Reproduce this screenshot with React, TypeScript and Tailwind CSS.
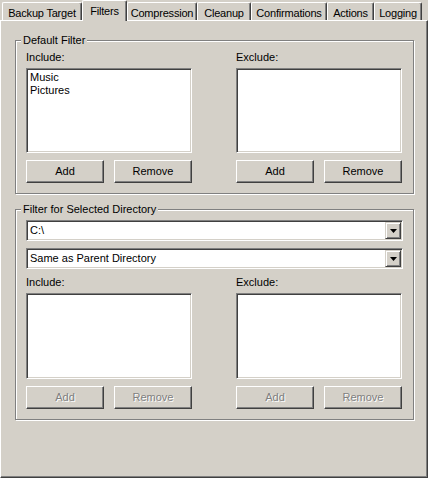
import React from "react";

const font = { fontFamily: '"Liberation Sans", Arial, sans-serif' };

function Tab({ label, w, active }: { label: string; w: string; active?: boolean }) {
  return active ? (
    <div
      className={`${w} relative z-10 -mb-px flex h-[21px] items-start justify-center whitespace-nowrap rounded-t-[2px] border-l border-t border-r border-l-white border-t-white border-r-[#404040] bg-[#d4d0c8] pt-[2px] tracking-[-0.2px] shadow-[inset_-1px_0_0_#808080]`}
    >
      {label}
    </div>
  ) : (
    <div
      className={`${w} flex h-[18px] items-start justify-center whitespace-nowrap rounded-t-[2px] border-l border-t border-r border-l-white border-t-white border-r-[#404040] bg-[#d4d0c8] pt-[2px] tracking-[-0.2px] shadow-[inset_-1px_0_0_#808080]`}
    >
      {label}
    </div>
  );
}

function Button({ label, disabled }: { label: string; disabled?: boolean }) {
  return (
    <div className="flex h-[23px] items-center justify-center border border-l-white border-t-white border-r-[#404040] border-b-[#404040] bg-[#d4d0c8] shadow-[inset_-1px_-1px_0_#808080]">
      <span className={disabled ? "text-[#808080] [text-shadow:1px_1px_0_#fff]" : "text-black"}>{label}</span>
    </div>
  );
}

function ListBox({ items, h }: { items: string[]; h: string }) {
  return (
    <div
      className={`${h} border border-l-[#808080] border-t-[#808080] border-r-white border-b-white bg-white px-[3px] py-[2px] shadow-[inset_1px_1px_0_#404040,inset_-1px_-1px_0_#d4d0c8]`}
    >
      {items.map((i) => (
        <div key={i} className="h-[13px] leading-[13px]">
          {i}
        </div>
      ))}
    </div>
  );
}

function Combo({ value }: { value: string }) {
  return (
    <div className="flex h-[21px] items-center border border-l-[#808080] border-t-[#808080] border-r-white border-b-white bg-white p-px shadow-[inset_1px_1px_0_#404040,inset_-1px_-1px_0_#d4d0c8]">
      <div className="flex-1 pl-[2px] leading-[13px]">{value}</div>
      <div className="flex h-[17px] w-[16px] items-center justify-center border border-l-[#d4d0c8] border-t-[#d4d0c8] border-r-[#404040] border-b-[#404040] bg-[#d4d0c8] shadow-[inset_1px_1px_0_#fff,inset_-1px_-1px_0_#808080]">
        <svg width="7" height="4" viewBox="0 0 7 4">
          <path d="M0 0h7L3.5 4z" fill="#000" />
        </svg>
      </div>
    </div>
  );
}

function Group({ title, children, cls }: { title: string; children: React.ReactNode; cls: string }) {
  return (
    <div className={`relative border border-[#808080] shadow-[inset_1px_1px_0_#fff,1px_1px_0_#fff] ${cls}`}>
      <div className="absolute left-[5px] top-[-7px] bg-[#d4d0c8] px-[2px] leading-[13px]">{title}</div>
      {children}
    </div>
  );
}

function Columns({ disabled, listH, items }: { disabled?: boolean; listH: string; items: [string[], string[]] }) {
  return (
    <div className="grid grid-cols-[166px_166px] gap-x-[44px]">
      {(["Include:", "Exclude:"] as const).map((lbl, idx) => (
        <div key={lbl} className="flex flex-col">
          <div className="h-[13px] leading-[13px]">{lbl}</div>
          <div className="mt-[4px]">
            <ListBox items={items[idx]} h={listH} />
          </div>
          <div className="mt-[7px] grid grid-cols-[78px_78px] gap-x-[10px]">
            <Button label="Add" disabled={disabled} />
            <Button label="Remove" disabled={disabled} />
          </div>
        </div>
      ))}
    </div>
  );
}

export default function App() {
  return (
    <div className="h-[478px] w-[428px] overflow-hidden bg-[#d4d0c8] text-[11px] text-black" style={font}>
      <div className="flex h-[20px] items-end pl-[2px]">
        <Tab label="Backup Target" w="w-[80px]" />
        <Tab label="Filters" w="w-[45px]" active />
        <Tab label="Compression" w="w-[70px]" />
        <Tab label="Cleanup" w="w-[54px]" />
        <Tab label="Confirmations" w="w-[76px]" />
        <Tab label="Actions" w="w-[47px]" />
        <Tab label="Logging" w="w-[48px]" />
      </div>
      <div className="h-[458px] border border-l-white border-t-white border-r-[#404040] border-b-[#404040] pl-[14px] pt-[19px] shadow-[inset_-1px_-1px_0_#808080]">
        <div className="w-[399px]">
          <Group title="Default Filter" cls="px-[10px] pb-[10px] pt-[10px]">
            <Columns listH="h-[85px]" items={[["Music", "Pictures"], []]} />
          </Group>
          <Group title="Filter for Selected Directory" cls="mt-[15px] px-[10px] pb-[10px] pt-[10px]">
            <Combo value="C:\" />
            <div className="mt-[7px]">
              <Combo value="Same as Parent Directory" />
            </div>
            <div className="mt-[7px]">
              <Columns disabled listH="h-[86px]" items={[[], []]} />
            </div>
          </Group>
        </div>
      </div>
    </div>
  );
}
